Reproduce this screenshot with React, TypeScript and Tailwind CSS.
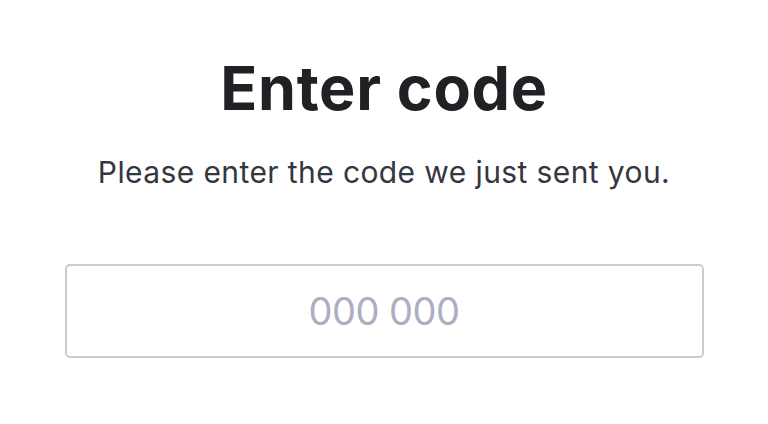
export default function App() {
  return (
    <div className="w-[768px] h-[424px] bg-white flex flex-col items-center pt-[48px]" style={{ fontFamily: "Inter, 'Noto Sans', sans-serif" }}>
      <h1 className="text-[61px] leading-[80px] font-bold text-[#202124] tracking-[0.7px]">Enter code</h1>
      <p className="mt-[27px] text-[30px] leading-[34px] text-[#36363f] tracking-[0.4px]">Please enter the code we just sent you.</p>
      <div className="mt-[75px] w-[639px] h-[94px] border-2 border-[#cbc9d5] rounded-[5px] flex items-center justify-center">
        <input
          className="w-full h-full text-center bg-transparent outline-none text-[38px] tracking-[-0.5px] text-[#3a3a44] placeholder:text-[#aeadc2]"
          placeholder="000 000"
        />
      </div>
    </div>
  );
}
